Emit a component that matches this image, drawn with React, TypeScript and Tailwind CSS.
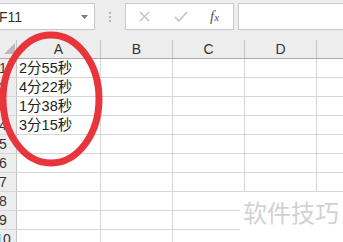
const rows = [
  { n: '1', a: '2分55秒' },
  { n: '2', a: '4分22秒' },
  { n: '3', a: '1分38秒' },
  { n: '4', a: '3分15秒' },
  { n: '5', a: '' },
  { n: '6', a: '' },
  { n: '7', a: '' },
  { n: '8', a: '' },
  { n: '9', a: '' },
  { n: '10', a: '' },
];

const font = { fontFamily: '"Liberation Sans", "Noto Sans CJK SC", sans-serif' };

export default function App() {
  return (
    <div className="relative w-[343px] h-[242px] overflow-hidden bg-white" style={font}>
      {/* Formula bar */}
      <div className="flex h-[40px] bg-[#ededed] pt-[3px] items-start">
        <div className="flex items-center justify-between w-[95px] h-[27px] bg-white border border-l-0 border-[#c9c9c9] pr-[6px]">
          <span className="text-[14px] text-[#333] leading-none -ml-[1px]">F11</span>
          <svg width="7" height="4" viewBox="0 0 7 4">
            <path d="M0 0h7L3.5 4z" fill="#7a7a7a" />
          </svg>
        </div>
        <div className="w-[30px] h-[27px] flex flex-col items-center justify-center gap-[2px]">
          <span className="w-[2px] h-[2px] bg-[#b5b5b5]" />
          <span className="w-[2px] h-[2px] bg-[#b5b5b5]" />
          <span className="w-[2px] h-[2px] bg-[#b5b5b5]" />
        </div>
        <div className="flex items-center w-[109px] h-[27px] bg-white border border-[#c9c9c9]">
          <svg className="ml-[13px]" width="11" height="11" viewBox="0 0 11 11">
            <path d="M1 1l9 9M10 1l-9 9" stroke="#c4c4c4" strokeWidth="1.5" />
          </svg>
          <svg className="ml-[24px]" width="14" height="11" viewBox="0 0 14 11">
            <path d="M1 6l4 4 8-9" stroke="#c4c4c4" strokeWidth="1.6" fill="none" />
          </svg>
          <span className="ml-[22px] text-[15px] italic text-[#555] leading-none" style={{ fontFamily: '"Liberation Serif", serif' }}>
            f<span className="text-[11px]">x</span>
          </span>
        </div>
        <div className="ml-[4px] flex-1 h-[27px] bg-white border border-r-0 border-[#c9c9c9]" />
      </div>

      {/* Column headers */}
      <div className="flex h-[19px] bg-[#ededed] border-b border-[#ababab] text-[14px] text-[#333]">
        <div className="relative w-[17px] border-r border-[#c4c4c4]">
          <svg className="absolute left-[4px] top-[3px]" width="11" height="11" viewBox="0 0 11 11">
            <path d="M11 0v11H0z" fill="#b9b9b9" />
          </svg>
        </div>
        <div className="w-[84px] border-r border-[#c4c4c4] flex items-center justify-center leading-none">A</div>
        <div className="w-[72px] border-r border-[#c4c4c4] flex items-center justify-center leading-none">B</div>
        <div className="w-[72px] border-r border-[#c4c4c4] flex items-center justify-center leading-none">C</div>
        <div className="w-[72px] border-r border-[#c4c4c4] flex items-center justify-center leading-none">D</div>
        <div className="flex-1" />
      </div>

      {/* Rows */}
      {rows.map((r) => (
        <div key={r.n} className="flex h-[19px] border-b border-[#d6d6d6]">
          <div className="w-[17px] bg-[#ededed] border-r border-[#c4c4c4] overflow-hidden">
            <div className="w-[26px] -ml-[10px] text-center text-[14px] leading-[18px] text-[#333]">{r.n}</div>
          </div>
          <div className="w-[84px] border-r border-[#d6d6d6] pl-[2px] text-[14.5px] leading-[18px] text-[#222]">{r.a}</div>
          <div className="w-[72px] border-r border-[#d6d6d6]" />
          <div className="w-[72px] border-r border-[#d6d6d6]" />
          <div className="w-[72px] border-r border-[#d6d6d6]" />
          <div className="flex-1" />
        </div>
      ))}

      {/* Red circle annotation */}
      <svg className="absolute left-0 top-0 pointer-events-none" width="343" height="242">
        <ellipse cx="51" cy="99" rx="48" ry="64" fill="none" stroke="#e8353b" strokeWidth="7" />
      </svg>

      {/* Watermark */}
      <div className="absolute left-[240px] top-[192px] right-0 bottom-0 bg-white">
        <span className="absolute left-[3px] top-[8px] text-[24px] leading-none text-[#d2d2d2]" style={{ fontFamily: '"Noto Sans CJK SC", sans-serif' }}>
          软件技巧
        </span>
      </div>
    </div>
  );
}
